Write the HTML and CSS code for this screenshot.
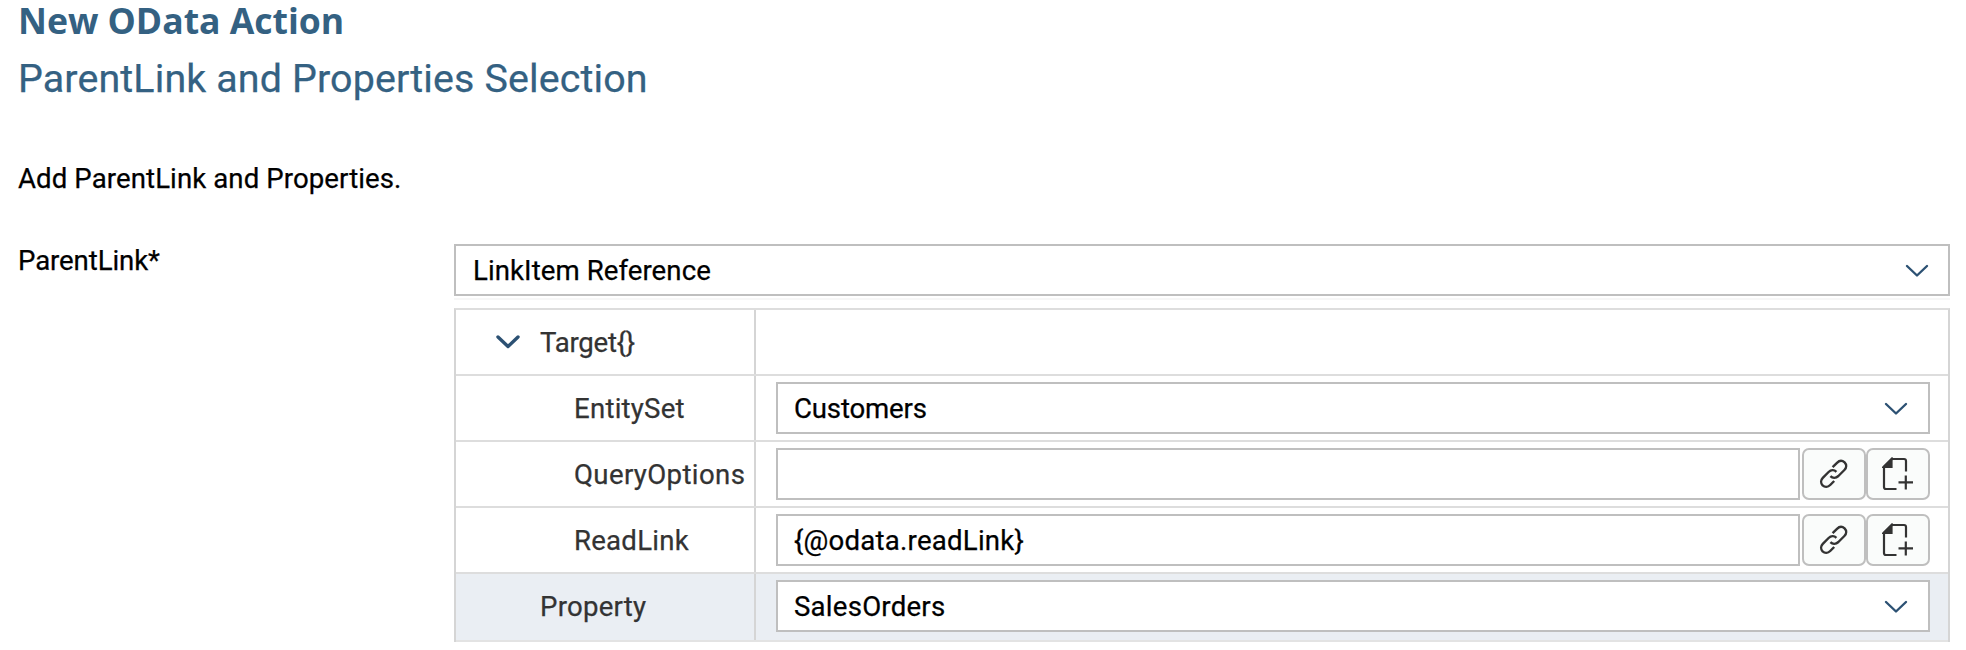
FILE: index.html
```html
<!DOCTYPE html>
<html lang="en">
<head>
<meta charset="utf-8">
<title>New OData Action</title>
<link rel="stylesheet" href="styles.css">
</head>
<body>
<svg class="sprite" aria-hidden="true">
  <symbol id="chevron" viewBox="0 0 24 14"><path d="M2 2 L12 11.5 L22 2"/></symbol>
  <symbol id="link" viewBox="0 0 30 30">
    <path d="M13.6 8.2 L18 3.8 C20.4 1.4 23.4 1.4 25.6 3.4 C27.7 5.6 27.7 8.7 25.4 11 L19.4 17 C16.8 19.4 13.6 19.4 11.4 17.2"/>
    <path d="M17.4 12.8 C15.2 10.6 12 10.6 9.6 13 L3.8 18.8 C1.6 21.1 1.6 24.2 3.6 26.4 C5.7 28.4 8.9 28.4 11.2 26 L15.2 22"/>
  </symbol>
  <symbol id="doc" viewBox="0 0 32 34">
    <path d="M14.5 32 H4 Q2 32 2 30 V10 L10 2 H22 Q24 2 24 4 V14.5"/>
    <path class="fold" d="M1.5 10 L9.5 2 V10 Z"/>
    <path d="M16.5 25.3 H31 M23.8 18.5 V32.5"/>
  </symbol>
</svg>
<main class="wizard">
  <h1 class="title">New OData Action</h1>
  <h2 class="subtitle">ParentLink and Properties Selection</h2>
  <p class="hint">Add ParentLink and Properties.</p>
  <div class="form">
    <label class="form-label">ParentLink*</label>
    <div class="form-body">
      <div class="box select outer"><span class="wide">LinkItem Reference</span><svg class="chevron"><use href="#chevron"/></svg></div>
      <div class="shade"></div>
      <div class="tree">
        <div class="row">
          <div class="name root"><svg class="expander"><use href="#chevron"/></svg><span class="target">Target{}</span></div>
          <div class="value"></div>
        </div>
        <div class="row">
          <div class="name child"><span class="loose">EntitySet</span></div>
          <div class="value"><div class="box select"><span class="tight">Customers</span><svg class="chevron"><use href="#chevron"/></svg></div></div>
        </div>
        <div class="row">
          <div class="name child"><span class="looser">QueryOptions</span></div>
          <div class="value"><div class="box"></div>
            <button class="btn first"><svg class="link"><use href="#link"/></svg></button><button class="btn"><svg class="doc"><use href="#doc"/></svg></button></div>
        </div>
        <div class="row">
          <div class="name child"><span class="loose">ReadLink</span></div>
          <div class="value"><div class="box"><span class="loose">{@odata.readLink}</span></div>
            <button class="btn first"><svg class="link"><use href="#link"/></svg></button><button class="btn"><svg class="doc"><use href="#doc"/></svg></button></div>
        </div>
        <div class="row selected">
          <div class="name leaf"><span class="loose">Property</span></div>
          <div class="value"><div class="box select"><span class="loose">SalesOrders</span><svg class="chevron"><use href="#chevron"/></svg></div></div>
        </div>
      </div>
    </div>
  </div>
</main>
</body>
</html>
```
FILE: styles.css
```css
* { box-sizing: border-box; }
body { margin: 0; background: #fff; color: #000; font: 27.6px/34px Roboto, "Liberation Sans", sans-serif; -webkit-text-stroke: .25px currentColor; }
.sprite { display: none; }
.wizard { padding: 0 16px 0 18px; }
.title { margin: 0; color: #346182; font: 700 35.6px/40px "Open Sans", sans-serif; letter-spacing: -.02px; -webkit-text-stroke: 0; }
.subtitle { margin: 15px 0 0; color: #346182; font-weight: 400; font-size: 39.4px; line-height: 48px; letter-spacing: .13px; }
.hint { margin: 58px 0 47px; line-height: 36px; letter-spacing: .09px; }
.form { display: flex; }
.form-label { width: 436px; letter-spacing: -.1px; }
.form-body { flex: 1; }
.box { display: flex; align-items: center; flex: 1; height: 52px; padding: 2px 20px 0 16px; border: 2px solid #bfbfbf; background: #fff; }
.select { justify-content: space-between; }
.outer { padding-left: 17px; padding-right: 19px; }
.chevron { width: 24px; height: 14px; fill: none; stroke: #2c5173; stroke-width: 2.4; stroke-linecap: round; stroke-linejoin: round; }
.shade { height: 2px; margin: 2px 0 8px; background: #f7f7f7; }
.tree { border: 2px solid #d5d5d5; border-top-color: #ddd; border-bottom: 0; }
.row { display: flex; height: 66px; border-bottom: 2px solid #ddd; color: #333; }
.name { display: flex; align-items: center; width: 300px; height: 64px; padding-top: 2px; border-right: 2px solid #d5d5d5; }
.root { padding-left: 40px; }
.child { padding-left: 118px; }
.leaf { padding-left: 84px; }
.expander { width: 24px; height: 14px; margin: 0 20px 2px 0; fill: none; stroke: #2c5173; stroke-width: 3.4; stroke-linecap: round; stroke-linejoin: round; }
.value { display: flex; flex: 1; padding: 6px 18px 0 20px; color: #000; }
.btn { display: flex; align-items: center; justify-content: center; width: 64px; height: 52px; padding: 0; border: 2px solid #bfbfbf; border-radius: 7px; background: #fafcfb; }
.first { margin-left: 2px; }
.link { width: 30px; height: 30px; fill: none; stroke: #333; stroke-width: 2.4; }
.doc { width: 32px; height: 34px; fill: none; stroke: #333; stroke-width: 2.2; }
.fold { fill: #333; }
.selected { height: 68px; border-bottom-color: #e3e3e3; background: #eaeef3; }
.selected .name { height: 66px; padding-bottom: 2px; }
.wide { letter-spacing: .07px; }
.loose { letter-spacing: .23px; }
.looser { letter-spacing: .36px; }
.tight { letter-spacing: -.17px; }
.target { letter-spacing: -.25px; }
```
